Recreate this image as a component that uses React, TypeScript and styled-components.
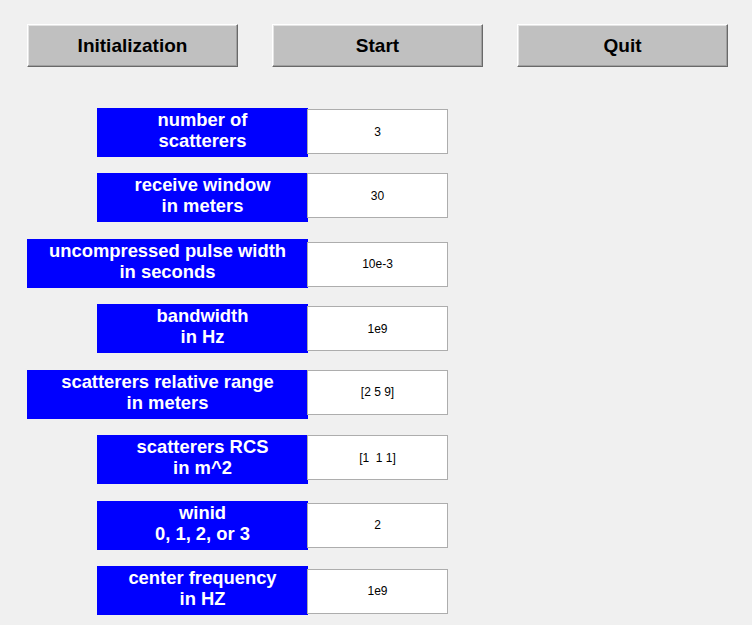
import styled, { createGlobalStyle } from "styled-components";

const GlobalStyle = createGlobalStyle`
  html, body {
    margin: 0;
    padding: 0;
    background: #f0f0f0;
    font-family: "Liberation Sans", Arial, sans-serif;
  }
`;

const Window = styled.div`
  width: 752px;
  height: 625px;
  box-sizing: border-box;
  padding: 24px 0 0 27px;
  background: #f0f0f0;
  overflow: hidden;
`;

const Toolbar = styled.div`
  display: flex;
  gap: 34px;
`;

const Button = styled.button`
  width: 211px;
  height: 43px;
  box-sizing: border-box;
  padding: 0;
  background: #c0c0c0;
  border: 1px solid;
  border-color: #ffffff #696969 #696969 #ffffff;
  box-shadow: inset -1px -1px 0 #a0a0a0, inset 1px 1px 0 #e3e3e3;
  font-family: "Liberation Sans", Arial, sans-serif;
  font-weight: bold;
  font-size: 19px;
  color: #000;
  cursor: pointer;
`;

const Form = styled.div`
  margin-top: 41px;
  display: grid;
  grid-auto-rows: 65.43px;
`;

const Row = styled.div`
  display: grid;
  grid-template-columns: 281px 141px;
  align-items: start;
`;

const Label = styled.div<{ $wide?: boolean }>`
  grid-column: 1;
  justify-self: end;
  width: ${(p) => (p.$wide ? "281px" : "211px")};
  height: 49px;
  box-sizing: border-box;
  padding-top: 1px;
  background: #0000ff;
  color: #ffffff;
  font-weight: bold;
  font-size: 18.4px;
  line-height: 21px;
  text-align: center;
  white-space: pre-line;
`;

const Field = styled.input<{ $drop: number }>`
  grid-column: 2;
  margin: ${(p) => p.$drop}px 0 0 -1px;
  width: 141px;
  height: 45px;
  box-sizing: border-box;
  padding: 0;
  border: 1px solid #adadad;
  background: #ffffff;
  font-family: "Liberation Sans", Arial, sans-serif;
  font-size: 12px;
  color: #000;
  text-align: center;
  outline: none;
`;

const rows = [
  { label: "number of\nscatterers", value: "3", drop: 1 },
  { label: "receive window\nin meters", value: "30", drop: 0 },
  { label: "uncompressed pulse width\nin seconds", value: "10e-3", drop: 3, wide: true },
  { label: "bandwidth\nin Hz", value: "1e9", drop: 2 },
  { label: "scatterers relative range\nin meters", value: "[2 5 9]", drop: 0, wide: true },
  { label: "scatterers RCS\nin m^2", value: "[1  1 1]", drop: 0 },
  { label: "winid\n0, 1, 2, or 3", value: "2", drop: 2 },
  { label: "center frequency\nin HZ", value: "1e9", drop: 3 },
];

export default function App() {
  return (
    <>
      <GlobalStyle />
      <Window>
        <Toolbar>
          <Button>Initialization</Button>
          <Button>Start</Button>
          <Button>Quit</Button>
        </Toolbar>
        <Form>
          {rows.map((r) => (
            <Row key={r.label}>
              <Label $wide={r.wide}>{r.label}</Label>
              <Field $drop={r.drop} defaultValue={r.value} />
            </Row>
          ))}
        </Form>
      </Window>
    </>
  );
}
